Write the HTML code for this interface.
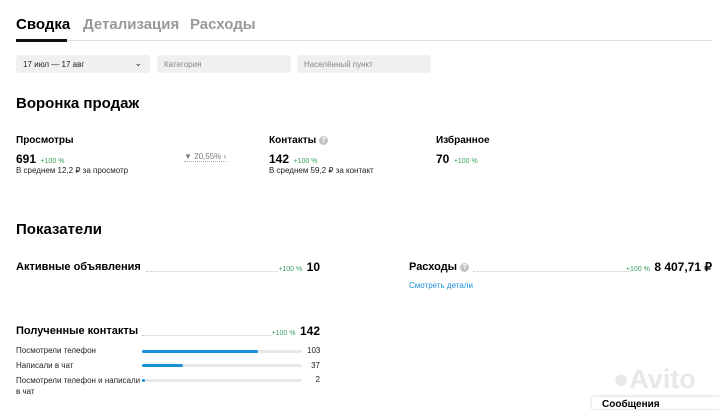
<!DOCTYPE html>
<html><head><meta charset="utf-8"><style>
*{margin:0;padding:0;box-sizing:border-box}
body{width:720px;height:406px;overflow:hidden;background:#fff;font-family:"Liberation Sans",Arial,sans-serif;color:#000;position:relative}
.a{position:absolute;white-space:nowrap}
.tab{font-size:15px;font-weight:bold;top:16px}
.f{position:absolute;top:55px;height:18px;background:#f0f0f0;border-radius:3px;font-size:8px;color:#888;padding:5px 7px}
.h{font-size:15px;font-weight:bold}
.lb{font-size:10px;font-weight:bold}
.big{font-size:12px;font-weight:bold}
.g{font-size:7px;color:#3a9d5d}
.s{font-size:8px;color:#222}
.dots{position:absolute;height:1px;border-top:1px dotted #ccc}
.bar{position:absolute;left:142px;width:160px;height:3px;background:#e8e8e8;border-radius:2px}
.bar i{display:block;height:3px;background:#1a90d9;border-radius:2px}
.q{display:inline-block;width:9px;height:9px;border-radius:50%;background:#c4c4c4;color:#fff;font-size:7px;text-align:center;line-height:9px;vertical-align:1px;margin-left:3px}
.rv{position:absolute;white-space:nowrap;line-height:14px}
</style></head><body>
<div class="a tab" style="left:16px">Сводка</div>
<div class="a tab" style="left:83px;color:#999">Детализация</div>
<div class="a tab" style="left:190px;color:#999">Расходы</div>
<div class="a" style="left:16px;top:40px;width:696px;height:1px;background:#ddd"></div>
<div class="a" style="left:16px;top:39px;width:51px;height:3px;background:#111"></div>

<div class="f" style="left:16px;width:134px;color:#222">17 июл — 17 авг<span style="position:absolute;right:8px;top:3px;font-size:9px">⌄</span></div>
<div class="f" style="left:157px;width:134px">Категория</div>
<div class="f" style="left:297px;width:134px">Населённый пункт</div>

<div class="a h" style="left:16px;top:95px">Воронка продаж</div>

<div class="a lb" style="left:16px;top:135px">Просмотры</div>
<div class="a" style="left:16px;top:150px"><span class="big">691</span> <span class="g">+100 %</span></div>
<div class="a s" style="left:16px;top:166px">В среднем 12,2 ₽ за просмотр</div>
<div class="a" style="left:184px;top:152px;font-size:8px;color:#777;border-bottom:1px dotted #aaa">▼ 20,55% ›</div>

<div class="a lb" style="left:269px;top:135px">Контакты<span class="q">?</span></div>
<div class="a" style="left:269px;top:150px"><span class="big">142</span> <span class="g">+100 %</span></div>
<div class="a s" style="left:269px;top:166px">В среднем 59,2 ₽ за контакт</div>

<div class="a lb" style="left:436px;top:135px">Избранное</div>
<div class="a" style="left:436px;top:150px"><span class="big">70</span> <span class="g">+100 %</span></div>

<div class="a h" style="left:16px;top:221px">Показатели</div>

<div class="a lb" style="left:16px;top:261px;font-size:11px">Активные объявления</div>
<div class="dots" style="left:146px;width:132px;top:271px"></div>
<div class="rv" style="right:400px;top:260px"><span class="g">+100 %</span> <span class="big">10</span></div>

<div class="a lb" style="left:409px;top:261px;font-size:11px">Расходы<span class="q">?</span></div>
<div class="dots" style="left:473px;width:158px;top:271px"></div>
<div class="rv" style="right:8px;top:260px"><span class="g">+100 %</span> <span class="big">8 407,71 ₽</span></div>
<div class="a" style="left:409px;top:281px;font-size:8px;color:#1a8fd9">Смотреть детали</div>

<div class="a lb" style="left:16px;top:325px;font-size:11px">Полученные контакты</div>
<div class="dots" style="left:142px;width:130px;top:335px"></div>
<div class="rv" style="right:400px;top:324px"><span class="g">+100 %</span> <span class="big">142</span></div>

<div class="a s" style="left:16px;top:346px">Посмотрели телефон</div>
<div class="bar" style="top:350px"><i style="width:116px"></i></div>
<div class="a s" style="left:307px;top:346px;width:13px;text-align:right">103</div>
<div class="a s" style="left:16px;top:361px">Написали в чат</div>
<div class="bar" style="top:364px"><i style="width:41px"></i></div>
<div class="a s" style="left:307px;top:361px;width:13px;text-align:right">37</div>
<div class="a s" style="left:16px;top:375px;line-height:11px;white-space:normal;width:125px">Посмотрели телефон и написали в чат</div>
<div class="bar" style="top:379px"><i style="width:3px"></i></div>
<div class="a s" style="left:307px;top:375px;width:13px;text-align:right">2</div>

<div class="a" style="left:613px;top:364px;font-size:27px;font-weight:bold;color:rgba(228,228,228,0.85)">●Avito</div>
<div class="a" style="left:592px;top:397px;width:128px;height:12px;background:#fff;box-shadow:0 0 4px rgba(0,0,0,.2);font-size:10px;padding:2px 10px;font-weight:bold">Сообщения</div>
</body></html>
